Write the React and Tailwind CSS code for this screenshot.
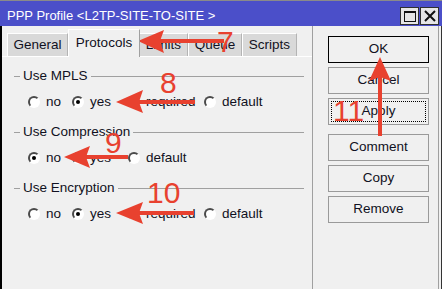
const RED = '#e8412f'

function Radio({ checked, label, className = '' }) {
  return (
    <div className={`flex items-center ${className}`}>
      <span className="flex h-[12px] w-[12px] shrink-0 items-center justify-center rounded-full border-2 border-t-[#4a4a4a] border-l-[#4a4a4a] border-r-white border-b-white bg-white">
        {checked && <span className="h-[4px] w-[4px] rounded-full bg-black" />}
      </span>
      <span className="ml-[6px] leading-4">{label}</span>
    </div>
  )
}

function Group({ title, children }) {
  return (
    <div className="h-[56px]">
      <div className="flex h-4 items-center">
        <span className="ml-[12px] h-px w-[6px] bg-[#a0a0a0]" />
        <span className="px-[3px] leading-4">{title}</span>
        <span className="mr-[8px] h-px flex-1 bg-[#a0a0a0]" />
      </div>
      <div className="mt-[9.5px] flex h-4 pl-[26px]">{children}</div>
    </div>
  )
}

function Btn({ children, className = '' }) {
  return (
    <div className={`flex h-[27px] w-[101px] items-center justify-center border bg-[#f0f0f0] ${className}`}>
      {children}
    </div>
  )
}

function Arrows() {
  return (
    <svg className="pointer-events-none absolute left-0 top-0" width="442" height="289" viewBox="0 0 442 289">
      <g fill={RED} stroke="none">
        {/* 7 */}
        <rect x="158" y="39" width="66" height="4" />
        <polygon points="138,41 164,30 160,41 164,53" />
        {/* 8 */}
        <rect x="138" y="100" width="57" height="4" />
        <polygon points="116,102 143,90 139,102 143,113" />
        {/* 9 */}
        <rect x="86" y="155" width="42" height="4" />
        <polygon points="64,157 90,146 86,157 90,168" />
        {/* 10 */}
        <rect x="138" y="211" width="56" height="4" />
        <polygon points="116,213 143,202 139,213 143,224" />
        {/* 11 */}
        <rect x="378" y="76" width="4" height="60" />
        <polygon points="380,57 391,81 380,77 369,81" />
      </g>
      <g fill={RED} fontFamily="'Liberation Sans', Arial, sans-serif" fontSize="30">
        <text x="217" y="52">7</text>
        <text x="160" y="93">8</text>
        <text x="105" y="153">9</text>
        <text x="147" y="203">10</text>
        <text x="333" y="121">11</text>
      </g>
    </svg>
  )
}

export default function App() {
  return (
    <div className="relative h-[289px] w-[442px] overflow-hidden bg-[#f0f0f0] font-['Liberation_Sans',Arial,sans-serif] text-[13.5px] text-[#111122]">
      {/* title bar */}
      <div className="flex h-[26px] items-start justify-between border-t border-[#8a8a8a] bg-[#4b4fc9]">
        <div className="pl-[7px] pt-[7px] text-[13px] leading-4 text-white">PPP Profile &lt;L2TP-SITE-TO-SITE &gt;</div>
        <div className="mr-[3px] mt-[6px] flex gap-[1px]">
          <div className="flex h-[18px] w-[19px] items-center justify-center border border-[#303030] bg-[#e6e6e6]">
            <span className="h-[11px] w-[12px] border border-t-2 border-[#111]" />
          </div>
          <div className="flex h-[18px] w-[19px] items-center justify-center border border-[#303030] bg-[#e6e6e6]">
            <svg width="12" height="12" viewBox="0 0 12 12">
              <path d="M1 1 L11 11 M11 1 L1 11" stroke="#111" strokeWidth="2" />
            </svg>
          </div>
        </div>
      </div>

      {/* body */}
      <div className="flex h-[263px] border-l-2 border-r border-l-black border-r-[#333]">
        <div className="flex w-[311px] flex-col border-r border-[#a0a0a0]">
          <div className="flex h-[30px] items-start pl-[5px] pt-[3px]">
            <div className="mt-[4px] flex h-[23px] w-[61px] items-center justify-center border-l border-t border-r border-l-white border-t-white border-r-[#b4b4b4] bg-[#d9d9d9]">General</div>
            <div className="relative z-10 flex h-[28px] w-[72px] items-center justify-center border-l border-t border-r border-l-white border-t-white border-r-[#a0a0a0] bg-[#f0f0f0] pb-[1px]">Protocols</div>
            <div className="mt-[4px] flex h-[23px] w-[48px] items-center justify-center border-t border-r border-t-white border-r-[#b4b4b4] bg-[#d9d9d9]">Limits</div>
            <div className="mt-[4px] flex h-[23px] w-[54px] items-center justify-center border-l border-t border-r border-l-white border-t-white border-r-[#b4b4b4] bg-[#d9d9d9]">Queue</div>
            <div className="mt-[4px] flex h-[23px] w-[55px] items-center justify-center border-l border-t border-r border-l-white border-t-white border-r-[#b4b4b4] bg-[#d9d9d9]">Scripts</div>
          </div>
          <div className="flex-1 border-t border-white">
            <div className="mt-[11px]">
              <Group title="Use MPLS">
                <Radio label="no" className="w-[44px]" />
                <Radio label="yes" checked className="w-[56px]" />
                <Radio label="required" className="w-[76px]" />
                <Radio label="default" />
              </Group>
              <Group title="Use Compression">
                <Radio label="no" checked className="w-[44px]" />
                <Radio label="yes" className="w-[56px]" />
                <Radio label="default" />
              </Group>
              <Group title="Use Encryption">
                <Radio label="no" className="w-[44px]" />
                <Radio label="yes" checked className="w-[56px]" />
                <Radio label="required" className="w-[76px]" />
                <Radio label="default" />
              </Group>
            </div>
          </div>
        </div>

        <div className="flex w-[126px] flex-col gap-[4px] border-r border-[#a0a0a0] pl-[15px] pt-[10px]">
          <Btn className="border-black">OK</Btn>
          <Btn className="border-[#9a9a9a]">Cancel</Btn>
          <Btn className="border-[#9a9a9a] p-[2px]">
            <div className="flex h-full w-full items-center justify-center border border-dotted border-black">Apply</div>
          </Btn>
          <Btn className="mt-[5px] border-[#9a9a9a]">Comment</Btn>
          <Btn className="border-[#9a9a9a]">Copy</Btn>
          <Btn className="border-[#9a9a9a]">Remove</Btn>
        </div>
      </div>

      <Arrows />
    </div>
  )
}
